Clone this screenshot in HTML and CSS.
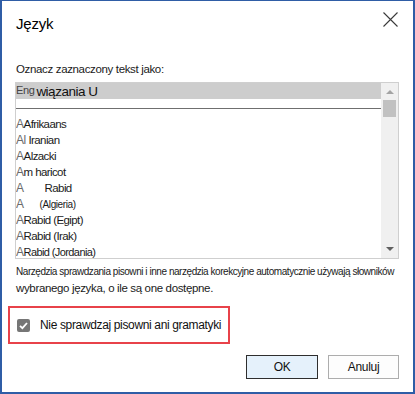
FILE: index.html
```html
<!DOCTYPE html>
<html lang="pl">
<head>
    <meta charset="UTF-8">
    <title>Język</title>
    <link rel="stylesheet" href="styles.css">
</head>
<body>
<div class="dialog">
    <div class="titlebar">
        <span class="title">Język</span>
        <span class="close">
            <svg width="15" height="15" viewBox="0 0 15 15"><path d="M0.5 0.5 L14.5 14.5 M14.5 0.5 L0.5 14.5" stroke="#3a3a3a" stroke-width="1.1" fill="none"/></svg>
        </span>
    </div>
    <div class="content">
        <div class="prompt">Oznacz zaznaczony tekst jako:</div>

        <!--lista języków-->
        <div class="langbox">
            <div class="langlist">
                <div class="current"><span class="code">Eng</span><span class="cur_name">wiązania U</span></div>
                <div class="sep"></div>
                <div class="row"><span class="glyph">A</span>Afrikaans</div>
                <div class="row"><span class="glyph">Al</span>&nbsp;Iranian</div>
                <div class="row"><span class="glyph">A</span>Alzacki</div>
                <div class="row"><span class="glyph">A</span>m haricot</div>
                <div class="row"><span class="glyph">A</span><span class="indent_big">Rabid</span></div>
                <div class="row"><span class="glyph">A</span><span class="indent_small">(Algieria)</span></div>
                <div class="row"><span class="glyph">A</span>Rabid (Egipt)</div>
                <div class="row"><span class="glyph">A</span>Rabid (Irak)</div>
                <div class="row last"><span class="glyph">A</span>Rabid (Jordania)</div>
            </div>
            <div class="scroll">
                <div class="arrow up"></div>
                <div class="thumb"></div>
                <div class="track"></div>
                <div class="arrow down"></div>
            </div>
        </div>

        <div class="hint1">Narzędzia sprawdzania pisowni i inne narzędzia korekcyjne automatycznie używają słowników</div>
        <div class="hint2">wybranego języka, o ile są one dostępne.</div>

        <!--zaznaczona opcja-->
        <label class="nocheck">
            <span class="checkbox">
                <svg width="13" height="13" viewBox="0 0 13 13"><path d="M3 6.8 L5.4 9.2 L10 4" stroke="#fff" stroke-width="1.8" fill="none"/></svg>
            </span>
            <span>Nie sprawdzaj pisowni ani gramatyki</span>
        </label>

        <div class="buttons">
            <button class="btn btn_ok">OK</button>
            <button class="btn">Anuluj</button>
        </div>
    </div>
</div>
</body>
</html>
```
FILE: styles.css
```css
*{
    margin: 0;
    padding: 0;
    box-sizing: border-box;
}
body{
    background: #fff;
    font-family: "Liberation Sans", Arial, sans-serif;
    font-size: 12px;
    color: #1a1a1a;
}
.dialog{
    width: 415px;
    height: 394px;
    border: 2px solid #2f5da6;
    border-top-width: 1px;
    background: #fff;
}
.titlebar{
    display: flex;
    justify-content: space-between;
    align-items: flex-start;
    height: 47px;
    padding: 12px 15px 0 14px;
}
.title{
    font-size: 15px;
    line-height: 22px;
    letter-spacing: -0.2px;
    color: #000;
}
.close{
    display: block;
    margin-top: -1px;
    height: 15px;
}
.close svg{
    display: block;
}
.content{
    padding: 0 14px 0 13px;
}
.prompt{
    margin-top: 13px;
    padding-left: 1px;
    line-height: 16px;
    font-size: 11.5px;
    letter-spacing: -0.35px;
}
.langbox{
    margin-top: 5px;
    height: 177px;
    border: 1px solid #cfcfcf;
    display: flex;
    overflow: hidden;
}
.langlist{
    flex: 1;
    overflow: hidden;
}
.current{
    height: 16px;
    background: #cdcdcd;
    display: flex;
    align-items: flex-start;
}
.code{
    font-size: 11px;
    line-height: 14px;
    color: #444;
    letter-spacing: -0.4px;
}
.cur_name{
    font-size: 13.5px;
    line-height: 18px;
    margin-left: 2px;
    color: #111;
    letter-spacing: -0.5px;
}
.sep{
    margin-top: 9px;
    height: 1px;
    background: #6f6f6f;
}
.row{
    height: 16px;
    line-height: 16px;
    font-size: 11.5px;
    letter-spacing: -0.6px;
    white-space: nowrap;
}
.sep + .row{
    margin-top: 7px;
}
.glyph{
    color: #6a6a6a;
    font-size: 12px;
    letter-spacing: -0.4px;
}
.indent_big{
    margin-left: 21px;
}
.indent_small{
    margin-left: 16px;
    font-size: 10px;
    letter-spacing: -0.4px;
}
.row.last{
    font-size: 11px;
}
.scroll{
    width: 17px;
    background: #f0f0f0;
    display: flex;
    flex-direction: column;
    align-items: center;
}
.arrow{
    width: 0;
    height: 0;
    border-left: 4px solid transparent;
    border-right: 4px solid transparent;
}
.arrow.up{
    margin-top: 7px;
    border-bottom: 4px solid #a3a3a3;
}
.thumb{
    margin-top: 6px;
    width: 13px;
    height: 17px;
    background: #c1c1c1;
}
.track{
    flex: 1;
}
.arrow.down{
    margin-bottom: 7px;
    border-top: 4px solid #606060;
}
.hint1{
    margin-top: 6px;
    padding-left: 1px;
    line-height: 14px;
    font-size: 10px;
    letter-spacing: -0.45px;
    white-space: nowrap;
}
.hint2{
    padding-left: 1px;
    line-height: 18px;
    font-size: 11.5px;
    letter-spacing: -0.35px;
}
.nocheck{
    margin: 9px 0 0 -7px;
    width: 222px;
    height: 38px;
    border: 2px solid #e8424a;
    display: flex;
    align-items: center;
    padding-left: 7px;
    font-size: 12px;
    letter-spacing: -0.35px;
    color: #111;
}
.checkbox{
    width: 13px;
    height: 13px;
    border-radius: 2px;
    background: #767676;
    margin-right: 10px;
    margin-top: 1px;
}
.checkbox svg{
    display: block;
}
.buttons{
    margin-top: 11px;
    display: flex;
    justify-content: flex-end;
    gap: 10px;
}
.btn{
    width: 71px;
    height: 24px;
    border: 1px solid #adadad;
    background: #fdfdfd;
    font-family: "Liberation Sans", Arial, sans-serif;
    font-size: 12px;
    letter-spacing: -0.3px;
    color: #111;
}
.btn_ok{
    width: 72px;
    background: #e5f1fb;
    border-color: #2e2e2e;
}
```
